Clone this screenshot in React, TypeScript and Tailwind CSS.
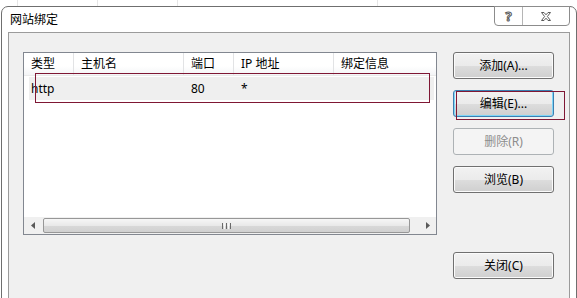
import React from "react";

const font = "font-['Noto_Sans','Noto_Sans_CJK_SC',sans-serif]";

function WinButton({
  label,
  focused,
  disabled,
  className = "",
}: {
  label: string;
  focused?: boolean;
  disabled?: boolean;
  className?: string;
}) {
  const base = "flex h-[27px] w-[101px] items-center justify-center rounded-[3px] border text-[12px] leading-none";
  const look = disabled
    ? "border-[#adb2b5] bg-[#f4f4f4] text-[#8d8d8d]"
    : focused
    ? "border-[#3c7fb1] bg-[linear-gradient(#f2f2f2_0%,#ebebeb_50%,#dddddd_51%,#cfcfcf_100%)] text-black shadow-[inset_0_0_0_1px_#7fd6f7]"
    : "border-[#707070] bg-[linear-gradient(#f2f2f2_0%,#ebebeb_50%,#dddddd_51%,#cfcfcf_100%)] text-black shadow-[inset_0_0_0_1px_#fbfbfb]";
  return <div className={`${base} ${look} ${className}`}>{label}</div>;
}

function ListView() {
  const cols = [
    { w: "w-[50px]", t: "类型" },
    { w: "w-[110px]", t: "主机名" },
    { w: "w-[50px]", t: "端口" },
    { w: "w-[100px]", t: "IP 地址" },
    { w: "flex-1", t: "绑定信息" },
  ];
  return (
    <div className="flex h-[183px] w-[414px] flex-col border border-[#828790] bg-white">
      {/* header */}
      <div className="flex h-[23px] bg-[linear-gradient(#ffffff_0%,#ffffff_60%,#f3f4f6_100%)] border-b border-[#eaeaea]">
        {cols.map((c, i) => (
          <div
            key={i}
            className={`${c.w} flex items-center pl-[7px] text-[12px] text-black ${i < 4 ? "border-r border-[#e2e3e5]" : ""}`}
          >
            {c.t}
          </div>
        ))}
      </div>
      {/* selected row */}
      <div className="mt-[1px] ml-[5px] mr-[2px] flex h-[23px] items-center bg-[#efefef] text-[12px] text-black">
        <div className="w-[45px] pl-[2px]">http</div>
        <div className="w-[110px]" />
        <div className="w-[50px] pl-[7px]">80</div>
        <div className="w-[100px] pl-[7px]">*</div>
      </div>
      {/* horizontal scrollbar */}
      <div className="mt-auto flex h-[17px] items-center bg-[#f0f0f0]">
        <div className="flex h-[17px] w-[17px] items-center justify-center">
          <svg width="4" height="7" viewBox="0 0 4 7">
            <path d="M4 0 L0 3.5 L4 7 Z" fill="#5a5a5a" />
          </svg>
        </div>
        <div className="ml-[2px] flex h-[15px] w-[367px] items-center justify-center rounded-[2px] border border-[#979797] bg-[linear-gradient(#f6f6f6_0%,#e9e9e9_50%,#d9d9d9_51%,#d0d0d0_100%)]">
          <div className="flex gap-[1px]">
            <div className="h-[6px] w-[1px] bg-[#6a6a6a]" />
            <div className="h-[6px] w-[1px] bg-[#f8f8f8]" />
            <div className="h-[6px] w-[1px] bg-[#6a6a6a]" />
            <div className="h-[6px] w-[1px] bg-[#f8f8f8]" />
            <div className="h-[6px] w-[1px] bg-[#6a6a6a]" />
          </div>
        </div>
        <div className="ml-auto flex h-[17px] w-[17px] items-center justify-center">
          <svg width="4" height="7" viewBox="0 0 4 7">
            <path d="M0 0 L4 3.5 L0 7 Z" fill="#5a5a5a" />
          </svg>
        </div>
      </div>
    </div>
  );
}

export default function App() {
  return (
    <div className={`relative h-[298px] w-[577px] overflow-hidden bg-white ${font}`}>
      {/* faint grid lines of the page behind */}
      <div className="flex h-[6px]">
        <div className="w-[18px] border-r border-[#e6e6e6]" />
        <div className="w-[80px] border-r border-[#e6e6e6]" />
        <div className="w-[80px] border-r border-[#e6e6e6]" />
        <div className="w-[200px] border-r border-[#e6e6e6]" />
      </div>

      {/* dialog window */}
      <div className="relative ml-[1px] flex h-[300px] w-[576px] flex-col rounded-t-[7px] border border-[#6f6f6f] bg-white px-[6px]">
        {/* caption buttons */}
        <div className="absolute left-[492px] top-[-1px] flex h-[20px] w-[76px] rounded-b-[4px] border border-[#8c8c8c] bg-white">
          <div className="flex w-[28px] items-center justify-center border-r border-[#b5b5b5]">
            <span className="text-[13px] font-bold leading-none text-white [-webkit-text-stroke:1px_#5a5a5a]">?</span>
          </div>
          <div className="flex flex-1 items-center justify-center">
            <svg width="10" height="9" viewBox="0 0 10 9">
              <path
                d="M0.5 0.5 H3 L5 2.8 L7 0.5 H9.5 L6.4 4.5 L9.5 8.5 H7 L5 6.2 L3 8.5 H0.5 L3.6 4.5 Z"
                fill="#ffffff"
                stroke="#5a5a5a"
                strokeWidth="1"
                strokeLinejoin="round"
              />
            </svg>
          </div>
        </div>

        {/* title */}
        <div className="flex h-[25px] items-center pl-[2px] text-[12px] text-black">网站绑定</div>

        {/* client area */}
        <div className="flex flex-1 border border-[#9b9b9b] bg-[#f0f0f0] pl-[14px] pt-[19px]">
          <ListView />
          <div className="ml-[16px] flex flex-col gap-[11px]">
            <WinButton label="添加(A)..." />
            <WinButton label="编辑(E)..." focused />
            <WinButton label="删除(R)" disabled />
            <WinButton label="浏览(B)" />
            <WinButton label="关闭(C)" className="mt-[48px]" />
          </div>
        </div>
      </div>

      {/* red annotation boxes */}
      <div className="absolute left-[35px] top-[73px] h-[30px] w-[395px] border border-[#7f1734]" />
      <div className="absolute left-[456px] top-[91px] h-[29px] w-[109px] border border-[#7f1734]" />
    </div>
  );
}
